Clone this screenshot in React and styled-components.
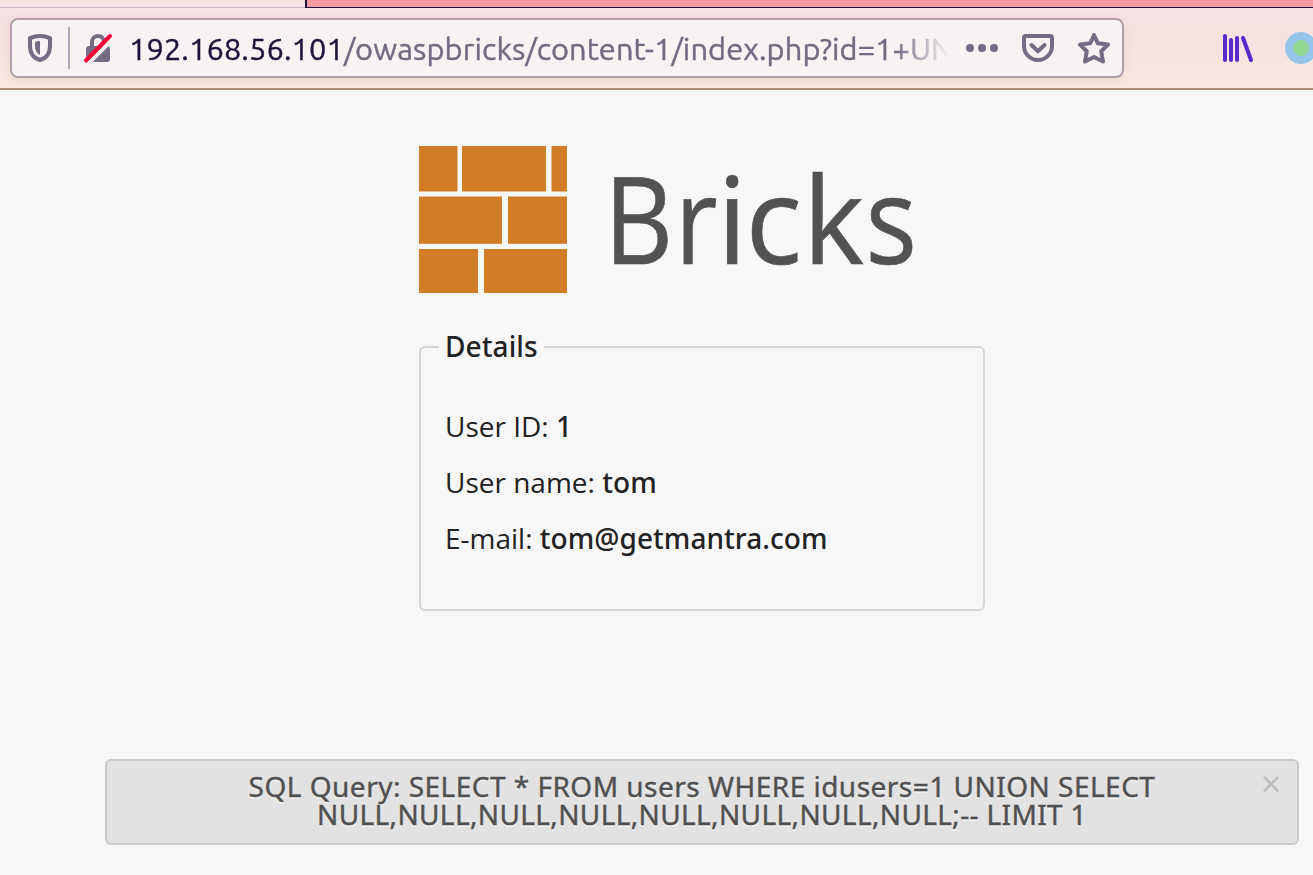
import React from "react";
import styled, { createGlobalStyle } from "styled-components";

const Global = createGlobalStyle`
  * { box-sizing: border-box; }
  body { margin: 0; background: #f7f7f7; overflow: hidden; }
`;

const Window = styled.div`
  width: 1313px;
  height: 875px;
  overflow: hidden;
  display: flex;
  flex-direction: column;
  background: #f7f7f7;
  color: #222;
  font-family: "Open Sans", "Noto Sans", sans-serif;
`;

const TabStrip = styled.div`
  display: flex;
  height: 8px;
  flex: none;
`;

const ActiveTab = styled.div`
  width: 305px;
  background: #f7e1e3;
  border-bottom: 1px solid #c9bac8;
`;

const TabRest = styled.div`
  flex: 1;
  background: #f99ba2;
  border-left: 2px solid #20123a;
  border-bottom: 1px solid #20123a;
`;

const Toolbar = styled.header`
  flex: none;
  height: 82px;
  padding: 10px 0 0 10px;
  display: flex;
  background: linear-gradient(#f6e1e3, #f6e1e0 45%, #f7e9de);
  border-bottom: 2px solid #b58a78;
`;

const UrlBar = styled.div`
  width: 1114px;
  height: 60px;
  flex: none;
  display: flex;
  align-items: center;
  padding-left: 14px;
  border: 2px solid #b0a0ac;
  border-radius: 8px;
  background: #f7f3f2;
  box-shadow: 0 2px 8px rgba(90, 50, 50, 0.09);
`;

const Icon = styled.svg`
  flex: none;
  display: block;
  width: ${(p) => p.$w || 32}px;
  height: 32px;
  margin-left: ${(p) => p.$ml || 0}px;
`;

const Divider = styled.span`
  width: 2px;
  height: 42px;
  margin-left: 10px;
  background: #b0a8b6;
`;

const Address = styled.div`
  width: 822px;
  height: 44px;
  margin-left: 15px;
  overflow: hidden;
  white-space: nowrap;
  font: 400 30.8px/46px "Ubuntu", "Noto Sans", sans-serif;
  letter-spacing: 0.08px;
  color: #736a82;
  -webkit-text-stroke: 0.4px currentColor;
  mask-image: linear-gradient(to right, #000 766px, transparent 820px);
`;

const Host = styled.span`
  color: #20123a;
`;

const Tools = styled.div`
  display: flex;
  align-items: center;
  height: 60px;
  margin-left: 98px;
`;

const Page = styled.main`
  flex: 1;
  display: flex;
  flex-direction: column;
  padding: 56px 14px 0 105px;
`;

const Content = styled.section`
  width: 566px;
  height: 613px;
  margin-left: 314px;
`;

const Logo = styled.svg`
  display: block;
  width: 520px;
  height: 148px;
`;

const Details = styled.fieldset`
  margin: 33px 0 0;
  height: 284px;
  width: 566px;
  padding: 31px 24px 0;
  border: 2px solid #d6d6d6;
  border-radius: 6px;
`;

const Legend = styled.legend`
  margin-left: -6px;
  padding: 0 6px 2px;
  font-family: "Noto Sans", sans-serif;
  font-size: 28px;
  line-height: 38px;
  font-weight: 500;
  letter-spacing: 0.1px;
`;

const Row = styled.p`
  margin: 0;
  font-size: 28px;
  line-height: 56px;
  white-space: nowrap;
`;

const Value = styled.strong`
  font-family: "Noto Sans", sans-serif;
  font-weight: 500;
  letter-spacing: 0.05px;
`;

const Alert = styled.div`
  display: flex;
  height: 86px;
  width: 1194px;
  padding: 11px 11px 0 0;
  border: 2px solid #cacaca;
  border-radius: 6px;
  background: #e2e2e2;
`;

const Query = styled.div`
  flex: 1;
  padding-left: 41px;
  text-align: center;
  font-family: "Noto Sans", sans-serif;
  font-size: 28px;
  line-height: 28px;
  -webkit-text-stroke: 0.4px currentColor;
  color: #505050;
  text-shadow: 0 2px 0 rgba(255, 255, 255, 0.5);
`;

const QueryLine = styled.div`
  letter-spacing: ${(p) => p.$spacing}px;
`;

const Close = styled.button`
  width: 30px;
  height: 24px;
  padding: 0;
  border: 0;
  background: none;
  font: 400 36px/24px "Open Sans", sans-serif;
  color: #bdbdbd;
`;

const INK = "#756c84";

const LETTERS = [
  ["B", 185, 69.2],
  ["r", 256, 42.6],
  ["i", 298, 30.3],
  ["c", 326.5, 56.5],
  ["k", 384, 61],
  ["s", 446.5, 51.5],
];

export default function App() {
  return (
    <Window>
      <Global />
      <TabStrip>
        <ActiveTab />
        <TabRest />
      </TabStrip>
      <Toolbar>
        <UrlBar>
          <Icon viewBox="0 0 32 32">
            <path d="M14 4 Q9 4 4 6.2 V14 Q4 25 14 28 Q24 25 24 14 V6.2 Q19 4 14 4Z" fill="none" stroke={INK} strokeWidth="4" strokeLinejoin="round" />
            <path d="M14 9 Q11 9 9 10 V14 Q9 20.5 14 23Z" fill={INK} />
          </Icon>
          <Divider />
          <Icon $ml={12} viewBox="0 0 32 32">
            <rect x="4" y="14" width="24" height="16" rx="3" fill={INK} />
            <path d="M10 15 V10 a6 6 0 0 1 12 0 V15" fill="none" stroke={INK} strokeWidth="4" />
            <path d="M6 32 L32 6" stroke="#f7f3f2" strokeWidth="4" />
            <path d="M4 28.5 L28 4" stroke="#ff0039" strokeWidth="4" strokeLinecap="round" />
          </Icon>
          <Address>
            <Host>192.168.56.101</Host>/owaspbricks/content-1/index.php?id=1+UN
          </Address>
          <Icon $ml={14} $w={34} viewBox="0 0 34 32" fill={INK}>
            <circle cx="5" cy="16" r="4" />
            <circle cx="17" cy="16" r="4" />
            <circle cx="29" cy="16" r="4" />
          </Icon>
          <Icon $ml={23} viewBox="0 0 32 32" fill="none" stroke={INK} strokeWidth="4" strokeLinecap="round" strokeLinejoin="round">
            <path d="M4 4 H28 a2 2 0 0 1 2 2 V14 a14 14 0 0 1 -28 0 V6 a2 2 0 0 1 2 -2Z" />
            <path d="M9.5 13 L16 19.2 L22.500 13" />
          </Icon>
          <Icon $ml={24} viewBox="0 0 32 32" fill="none" stroke={INK} strokeWidth="4" strokeLinejoin="round">
            <path d="M16 3 L19.700 11.200 L30 12.600 L23.200 19.200 L25 29.500 L16 25 L7 29.500 L8.800 19.200 L2 12.600 L12.300 11.200Z" />
          </Icon>
        </UrlBar>
        <Tools>
          <Icon viewBox="0 0 32 32" stroke="#592acb" strokeWidth="4" strokeLinecap="round">
            <path d="M3 4 V28 M9 8 V28 M15 6 V28 M21 6 L29 28" />
          </Icon>
          <Icon $ml={30} viewBox="0 0 32 32">
            <circle cx="17" cy="16" r="16" fill="#95c5e9" />
            <circle cx="17" cy="16" r="8" fill="#93d993" />
          </Icon>
        </Tools>
      </Toolbar>
      <Page>
        <Content>
          <Logo viewBox="0 0 520 148">
            <g fill="#d17d26">
              <rect x="0" y="0" width="38.500" height="45.500" />
              <rect x="43" y="0" width="84" height="45.500" />
              <rect x="132.500" y="0" width="15.500" height="45.500" />
              <rect x="0" y="50.500" width="83" height="47.300" />
              <rect x="89" y="50.500" width="59" height="47.300" />
              <rect x="0" y="103" width="59" height="44" />
              <rect x="65" y="103" width="83" height="44" />
            </g>
            <text y="118" fontSize="120" fill="#525252" stroke="#525252" strokeWidth="0.6" fontFamily="Open Sans, Noto Sans, sans-serif">
              {LETTERS.map(([glyph, x, width]) => (
                <tspan key={glyph} x={x} textLength={width} lengthAdjust="spacingAndGlyphs">{glyph}</tspan>
              ))}
            </text>
          </Logo>
          <Details>
            <Legend>Details</Legend>
            <Row>User ID: <Value>1</Value></Row>
            <Row>User name: <Value>tom</Value></Row>
            <Row>E-mail: <Value>tom@getmantra.com</Value></Row>
          </Details>
        </Content>
        <Alert>
          <Query>
            <QueryLine $spacing={0.48}>SQL Query: SELECT * FROM users WHERE idusers=1 UNION SELECT</QueryLine>
            <QueryLine $spacing={0.36}>NULL,NULL,NULL,NULL,NULL,NULL,NULL,NULL;-- LIMIT 1</QueryLine>
          </Query>
          <Close>×</Close>
        </Alert>
      </Page>
    </Window>
  );
}
